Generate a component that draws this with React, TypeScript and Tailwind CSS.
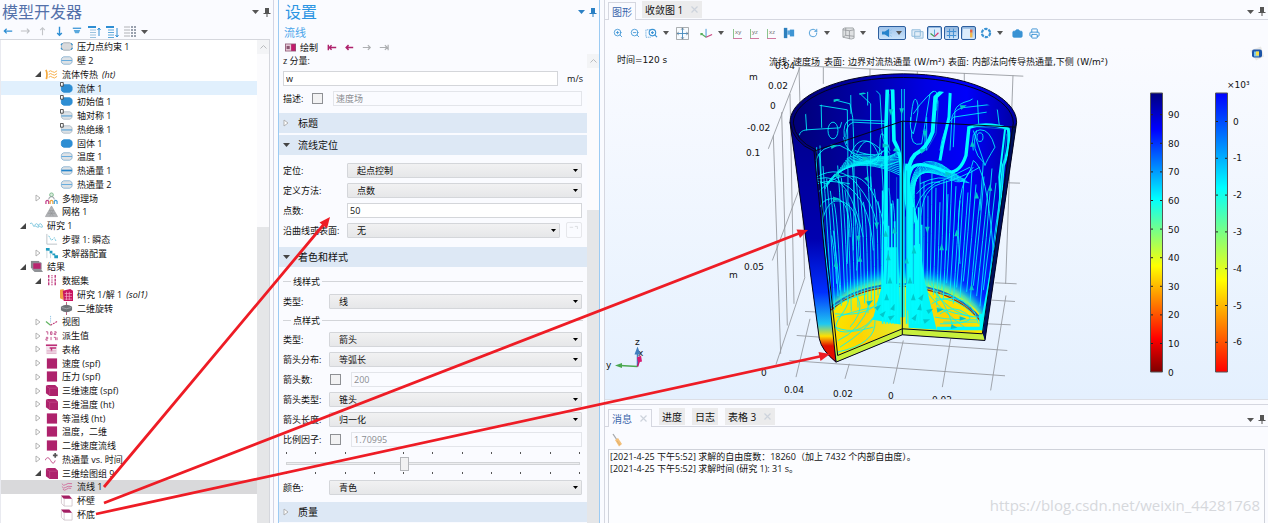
import { useState, type ReactNode } from "react";
import clsx from "clsx";
import { Camera, Printer, RotateCw, ZoomIn, ZoomOut } from "lucide-react";

type NodeRow = {
	level: 1 | 2 | 3;
	icon: string;
	label: string;
	tag?: string;
	open?: boolean;
};

const tree: NodeRow[] = [
	{ level: 3, icon: "point", label: "压力点约束 1" },
	{ level: 3, icon: "edge", label: "壁 2" },
	{ level: 2, icon: "heat", label: "流体传热", tag: "(ht)", open: true },
	{ level: 3, icon: "domainD", label: "流体 1" },
	{ level: 3, icon: "domainD", label: "初始值 1" },
	{ level: 3, icon: "edgeD", label: "轴对称 1" },
	{ level: 3, icon: "edgeD", label: "热绝缘 1" },
	{ level: 3, icon: "domain", label: "固体 1" },
	{ level: 3, icon: "edge", label: "温度 1" },
	{ level: 3, icon: "edgeBold", label: "热通量 1" },
	{ level: 3, icon: "edge", label: "热通量 2" },
	{ level: 2, icon: "multi", label: "多物理场", open: false },
	{ level: 2, icon: "mesh", label: "网格 1" },
	{ level: 1, icon: "study", label: "研究 1", open: true },
	{ level: 2, icon: "step", label: "步骤 1: 瞬态" },
	{ level: 2, icon: "solver", label: "求解器配置", open: false },
	{ level: 1, icon: "results", label: "结果", open: true },
	{ level: 2, icon: "data", label: "数据集", open: true },
	{ level: 3, icon: "solution", label: "研究 1/解 1", tag: "(sol1)" },
	{ level: 3, icon: "revolve", label: "二维旋转" },
	{ level: 2, icon: "view", label: "视图", open: false },
	{ level: 2, icon: "derived", label: "派生值", open: false },
	{ level: 2, icon: "tables", label: "表格", open: false },
	{ level: 2, icon: "plot2d", label: "速度 (spf)", open: false },
	{ level: 2, icon: "plot2d", label: "压力 (spf)", open: false },
	{ level: 2, icon: "plot3d", label: "三维速度 (spf)", open: false },
	{ level: 2, icon: "plot3d", label: "三维温度 (ht)", open: false },
	{ level: 2, icon: "plot2d", label: "等温线 (ht)", open: false },
	{ level: 2, icon: "plot2d", label: "温度，二维", open: false },
	{ level: 2, icon: "plot2d", label: "二维速度流线", open: false },
	{ level: 2, icon: "plot1d", label: "热通量 vs. 时间", open: false },
	{ level: 2, icon: "plot3d", label: "三维绘图组 9", open: true },
	{ level: 3, icon: "stream", label: "流线 1" },
	{ level: 3, icon: "surface", label: "杯壁" },
	{ level: 3, icon: "surface", label: "杯底" },
];

const indent = { 1: "pl-[16px]", 2: "pl-[31px]", 3: "pl-[46px]" };

const pill = "M4 3h6.500q2.500 1 2.500 2.500v3q0 1.500-2.500 2.500H4Q1.500 10 1.500 8.500v-3Q1.500 4 4 3z";

const treeIcons: Record<string, ReactNode> = {
	point: (
		<>
			<path d={pill} fill="#d8dadc" stroke="#a3adb5" />
			<path d="M1 5.500l1.500-2M12 3.500l1.500 2M1 8.500l1.500 2M12 10.500l1.500-2" stroke="#2f8fd0" strokeWidth="1.200" />
		</>
	),
	edge: (
		<>
			<path d={pill} fill="#dde2e6" stroke="#8fb6d3" />
			<path d="M1.500 7h11.500" stroke="#5ea8dc" />
		</>
	),
	edgeBold: (
		<>
			<path d={pill} fill="#dde2e6" stroke="#8fb6d3" />
			<path d="M1.500 7h11.500" stroke="#2384cb" strokeWidth="1.800" />
		</>
	),
	edgeD: (
		<>
			<path d={pill} fill="#dde2e6" stroke="#b4c0ca" />
			<path d="M1.500 7.500h11.500" stroke="#3d94d2" />
			<path d="M.5.5h3v4h-3z" fill="#fff" stroke="#333" strokeWidth=".9" />
		</>
	),
	domain: <path d={pill} fill="#2e8ed3" stroke="#2e8ed3" />,
	domainD: (
		<>
			<path d={pill} fill="#2e8ed3" stroke="#2e8ed3" />
			<path d="M.5.5h3v4h-3z" fill="#fff" stroke="#333" strokeWidth=".9" />
		</>
	),
	heat: (
		<g fill="none" stroke="#f5a93c">
			<path d="M1 2q2 4 .5 10" strokeWidth="1.800" />
			<path d="M4 4q2-2 4 0t5-1M4 7q2-2 4 0t5-1M4 10q2-2 4 0t5-1" />
		</g>
	),
	multi: (
		<g fill="none">
			<circle cx="7" cy="3" r="2" stroke="#7ab98a" fill="#d9ebdd" />
			<path d="M4 8q0-3 3-3t3 3" stroke="#8b9097" />
			<path d="M1 13v-3q1.500-2 3 0v3" stroke="#c2408a" strokeWidth="1.300" />
			<path d="M5.500 13v-3q1.500-2 3 0v3" stroke="#eea23a" strokeWidth="1.300" />
			<path d="M10 13v-3q1.500-2 3 0v3" stroke="#3f9fdc" strokeWidth="1.300" />
		</g>
	),
	mesh: (
		<>
			<path d="M7 1l6.500 11.500H.5z" fill="#b0b2b5" stroke="#a0a2a5" strokeWidth=".8" />
			<path d="M4.500 6h5M3 9h8M5 12l4-6M9 12L5 6" stroke="#8e9092" strokeWidth=".6" />
		</>
	),
	study: (
		<g fill="none" stroke="#7cc6de">
			<path d="M0 5q2-2 3 1t2 2" />
			<path d="M5 7q2-4 4 0t-4 0M9 7q2-4 4 0t-4 0" />
		</g>
	),
	step: (
		<g fill="none">
			<path d="M2 1v11h11" stroke="#b9c0c5" />
			<path d="M4 3l3 5 3-3 2 4" stroke="#63bdd8" strokeDasharray="2 1" />
		</g>
	),
	solver: (
		<>
			<path d="M1 1h4v3H1zM5 4h3v3H5zM8 7h3v2H8zM10 9h4v3h-4z" fill="#1e9cc0" />
			<path d="M2 4v8M6 7v5" stroke="#c9d5da" />
		</>
	),
	results: (
		<>
			<path d="M1 1h9v8H1z" fill="#85878b" />
			<path d="M3 3h9v7H3z" fill="#b9246f" stroke="#8f959b" />
			<path d="M2 10l3 3h9l-2-3z" fill="#8f9296" />
		</>
	),
	data: (
		<g stroke="#bf3b7e" strokeWidth="1.500">
			<path d="M4 1v12" strokeDasharray="3 1" />
			<path d="M7.500 1v12" strokeDasharray="1 1" />
			<path d="M11 1v12" strokeDasharray="3 1" />
		</g>
	),
	solution: (
		<>
			<path d="M0 2l4-1v12l-4-2z" fill="#f2a045" />
			<path d="M3 3l8-2 3 2v11H4z" fill="#c8145f" />
			<path d="M5 6h8M5 9h8M5 12h8M7 4v9M10 4v9" stroke="#f6b7cf" strokeWidth=".7" />
		</>
	),
	revolve: (
		<>
			<path d="M7 0v14" stroke="#b55a78" />
			<path d="M1 5q6-4 12 0v4q-6 4-12 0z" fill="#6f7378" />
			<path d="M2 6q5 2.500 10 0" fill="none" stroke="#b6bac0" strokeWidth=".7" />
		</>
	),
	view: (
		<g fill="none">
			<path d="M6 1v8" stroke="#78b6dc" strokeDasharray="1 1" />
			<path d="M6 11L1 7" stroke="#62b562" strokeWidth="1.300" />
			<path d="M6 11l7-4" stroke="#c23b7c" strokeWidth="1.300" strokeDasharray="2 1" />
		</g>
	),
	derived: (
		<g fill="none" stroke="#c2508a">
			<path d="M1 3h2v3M6 3h1.500v3H6zM10 3h2v1.500h-2V6h2M1 9h2v1.500H1V12h2M6.500 8.500V12M9.500 9h2v3M13 9v3" />
		</g>
	),
	tables: (
		<>
			<path d="M1 1h12v11H1z" fill="#f3e3ec" />
			<path d="M1 2.500h12M5 5.500h7M7 6v3" stroke="#bd2d77" strokeWidth="1.600" />
			<path d="M2 8.500h10M2 11h10" stroke="#d9a3bf" />
		</>
	),
	plot2d: <path d="M2 1.500h11v11H2z" fill="#ae226c" />,
	plot3d: (
		<>
			<path d="M1 2l2-1h8l3 3v9H5l-4-3z" fill="#ae226c" />
			<path d="M1.500 2.500l3.500 2v8M5 4.500h8.500" fill="none" stroke="#c95790" strokeWidth=".6" />
		</>
	),
	plot1d: (
		<>
			<path d="M0 8q3-6 6 0t5 0" fill="none" stroke="#c2508a" />
			<path d="M8.500 2.500h5M11 0v5" stroke="#555" strokeWidth="1.800" />
		</>
	),
	stream: (
		<g fill="none" stroke="#cf6d9b">
			<path d="M2 4q2 3 4 1t7-1M2 7q2 3 4 1t7-1M3 10q2 2 4 0t5-1" />
		</g>
	),
	surface: (
		<>
			<path d="M1 1.500h9l3 3.500H4z" fill="#a31f63" />
			<path d="M1.500 2v8l3 3h8.500V5M4.500 5v8" fill="none" stroke="#cbbdc5" strokeWidth=".8" />
		</>
	),
};

function Icon({ children, size = 14 }: { children: ReactNode; size?: number }) {
	return (
		<svg width={size} height={size} viewBox="0 0 14 14" className="shrink-0" aria-hidden="true">
			{children}
		</svg>
	);
}

function Caret({ className = "text-[#555]" }: { className?: string }) {
	return (
		<svg width="7" height="4" viewBox="0 0 7 4" className={clsx("shrink-0", className)} aria-hidden="true">
			<path d="M0 0h7L3.500 4z" fill="currentColor" />
		</svg>
	);
}

function WindowControls({ className = "text-[#555]" }: { className?: string }) {
	return (
		<div className={clsx("flex items-center gap-1", className)}>
			<button aria-label="菜单">
				<Caret className="text-current" />
			</button>
			<button aria-label="固定">
				<svg width="8" height="9" viewBox="0 0 8 9">
					<path d="M2 0h4v5h1.500v1h-3v3h-1V6h-3V5H2z" fill="currentColor" />
				</svg>
			</button>
		</div>
	);
}

function Scrollbar({ className }: { className: string }) {
	return (
		<div className="w-3 shrink-0 flex flex-col bg-[#fbfbfd]">
			<div className="h-[14px] flex items-center justify-center bg-[#f3f4f6]">
				<svg width="7" height="4" viewBox="0 0 7 4" aria-hidden="true">
					<path d="M.5 3.500l3-3 3 3" fill="none" stroke="#b9bbbe" />
				</svg>
			</div>
			<div className={className} />
			<div className="flex-1 bg-[#e5e6e8]" />
		</div>
	);
}

function ModelBuilder() {
	const [selected, setSelected] = useState(32);
	return (
		<aside className="w-[274px] shrink-0 flex flex-col border-r border-[#d3d5e4]">
			<header className="h-6 flex items-center justify-between pl-0.5 pr-0.5">
				<h1 className="text-[16px] leading-none text-[#5471aa]">模型开发器</h1>
				<WindowControls />
			</header>
			<div className="h-[15px] flex items-center pl-0.5 gap-1">
				<button aria-label="后退">
					<Icon size={13}><path d="M2 6.500h9M5 4L2.500 6.500 5 9" fill="none" stroke="#2e8ed3" strokeWidth="1.300" /></Icon>
				</button>
				<button aria-label="前进">
					<Icon size={13}><path d="M2 6.500h9M8.500 4L11 6.500 8.500 9" fill="none" stroke="#bdbfc3" strokeWidth="1.200" /></Icon>
				</button>
				<button aria-label="上移">
					<Icon size={13}><path d="M7 11V3M4.500 5.500L7 3l2.500 2.500" fill="none" stroke="#c3c5c9" strokeWidth="1.200" /></Icon>
				</button>
				<button aria-label="下移">
					<Icon size={13}><path d="M7 2v9M4.500 8.500L7 11l2.500-2.500" fill="none" stroke="#2e8ed3" strokeWidth="1.500" /></Icon>
				</button>
				<button aria-label="显示">
					<Icon size={13}><path d="M3 3.500h9" stroke="#2e8ed3" strokeWidth="1.300" /><path d="M4 5.500h7L9.500 9h-4z" fill="#5aa9de" /></Icon>
				</button>
				<button aria-label="折叠">
					<Icon><path d="M1 2h8" stroke="#2e8ed3" strokeWidth="2" /><path d="M3 5h6M3 7.500h6M3 10h6M3 12.500h6" stroke="#9cc3de" strokeWidth="1.200" /><path d="M12 11V3M10.500 5L12 3l1.500 2" fill="none" stroke="#2e8ed3" /></Icon>
				</button>
				<button aria-label="展开">
					<Icon><path d="M1 2h8" stroke="#2e8ed3" strokeWidth="2" /><path d="M3 5h6M3 7.500h6M3 10h6M3 12.500h6" stroke="#5fa9da" strokeWidth="1.200" /><path d="M12 3v9M10.500 10l1.500 2 1.500-2" fill="none" stroke="#2e8ed3" /></Icon>
				</button>
				<button aria-label="列" className="flex items-center gap-1">
					<Icon><path d="M1 2h6M1 5h6M1 8h6M1 11h6" stroke="#b0b2b6" /><path d="M8 2h2M8 5h2M8 8h2M8 11h2M11 2h2M11 5h2M11 8h2M11 11h2" stroke="#7a8494" strokeWidth="1.600" /></Icon>
					<Caret />
				</button>
			</div>
			<div className="flex-1 min-h-0 flex border-t border-r border-[#d5d7dd] mr-[3px] bg-white">
				<ul className="flex-1 flex flex-col pb-[2px] border-l border-[#e9eaf0]">
					{tree.map((row, i) => (
						<li key={i} className="flex-1 min-h-[13px] flex">
							<button
								onClick={() => setSelected(i)}
								className={clsx(
									"w-full flex items-center gap-px text-[9px] leading-none whitespace-nowrap",
									indent[row.level],
									i === selected && "bg-[#d9d9db]",
									i === 3 && i !== selected && "bg-[#e1f0fd]"
								)}
							>
								<span className="w-3 flex justify-center">
									{row.open === true && (
										<svg width="6" height="6" viewBox="0 0 6 6"><path d="M6 0v6H0z" fill="#444" /></svg>
									)}
									{row.open === false && (
										<svg width="6" height="8" viewBox="0 0 6 8"><path d="M1 1l4 3-4 3z" fill="#fff" stroke="#aaa" strokeWidth=".9" /></svg>
									)}
								</span>
								<span className="w-4">
									<Icon size={13}>{treeIcons[row.icon]}</Icon>
								</span>
								<span>
									{row.label}
									{row.tag && <em className="ml-1">{row.tag}</em>}
								</span>
							</button>
						</li>
					))}
				</ul>
				<Scrollbar className="h-[173px]" />
			</div>
		</aside>
	);
}

function Section({ title, open, className }: { title: string; open?: boolean; className?: string }) {
	return (
		<button
			aria-expanded={!!open}
			className={clsx("w-full h-5 shrink-0 flex items-center gap-[9px] pl-1 bg-[#dde8f5] text-[10px] leading-none", className)}
		>
			<span className="w-[6px] flex justify-center">
				{open ? (
					<Caret className="text-[#444]" />
				) : (
					<svg width="6" height="8" viewBox="0 0 6 8"><path d="M1 1l4 3-4 3z" fill="#fff" stroke="#aaa" strokeWidth=".9" /></svg>
				)}
			</span>
			{title}
		</button>
	);
}

const box = "h-[15px] min-w-0 border border-[#d4d6da] text-[9px] leading-none";

function Select({ id, value }: { id: string; value: string }) {
	return (
		<div className="relative flex-1 flex">
			<select
				id={id}
				className={clsx(box, "w-full appearance-none pl-[9px] rounded-[1px] bg-linear-to-b from-[#f1f1f2] to-[#e6e7e9]")}
			>
				<option>{value}</option>
			</select>
			<span className="absolute right-[4px] inset-y-0 flex items-center pointer-events-none">
				<svg width="5" height="3" viewBox="0 0 5 3"><path d="M0 0h5L2.500 3z" /></svg>
			</span>
		</div>
	);
}

function Field({ id, label, wide, children }: { id: string; label: string; wide?: boolean; children: ReactNode }) {
	return (
		<div className="h-5 shrink-0 flex items-center pl-1 pr-[5px]">
			<label htmlFor={id} className={clsx("shrink-0 whitespace-nowrap", wide ? "w-16" : "w-[46px]")}>
				{label}
			</label>
			{children}
		</div>
	);
}

function Check({ label }: { label: string }) {
	return (
		<input
			type="checkbox"
			aria-label={label}
			className="appearance-none w-[11px] h-[11px] shrink-0 border border-[#8e9094] bg-[#f2f2f3] ml-px mr-2.5"
		/>
	);
}

function Legend({ children }: { children: ReactNode }) {
	return (
		<div className="h-3 shrink-0 flex items-center gap-0.5 px-1">
			<span className="w-2 h-px bg-[#d3d5d9]" />
			<h3>{children}</h3>
			<span className="flex-1 h-px bg-[#d3d5d9]" />
		</div>
	);
}

function Ticks() {
	return (
		<div className="flex justify-between px-[3px]">
			{Array.from({ length: 11 }, (_, i) => (
				<span key={i} className="w-px h-[2px] bg-[#555]" />
			))}
		</div>
	);
}

function Settings() {
	return (
		<section className="w-[322px] shrink-0 mx-1 flex flex-col border-x border-[#9ccbf3] text-[9px] leading-none">
			<header className="h-6 flex items-center justify-between pl-1.5 pr-0.5">
				<h2 className="text-[16px] leading-none text-[#2b95e3]">设置</h2>
				<WindowControls className="text-[#2b80c4]" />
			</header>
			<p className="h-4 flex items-center pl-[5px] text-[11px] text-[#4aa5ea]">流线</p>
			<div className="h-[14px] flex items-center pl-1.5 gap-1">
				<button className="flex items-center gap-1">
					<Icon size={11}><path d="M0 2h14v10H0z" fill="#8d5573" /><path d="M1 3h7v8H1z" fill="#e8ccd9" /><path d="M2 5h4v4H2z" fill="#8a5571" /><path d="M8 3h5v8H8z" fill="#c31a6c" /></Icon>
					绘制
				</button>
				<button aria-label="第一个" className="ml-1">
					<Icon size={13}><path d="M2.500 4v6M3 7h8M6 4.500L3.500 7 6 9.500" fill="none" stroke="#ae226c" strokeWidth="1.500" /></Icon>
				</button>
				<button aria-label="上一个">
					<Icon size={13}><path d="M3 7h8M6 4.500L3.500 7 6 9.500" fill="none" stroke="#ae226c" strokeWidth="1.700" /></Icon>
				</button>
				<button aria-label="下一个">
					<Icon size={13}><path d="M3 7h8M8.500 4.500L11 7 8.500 9.500" fill="none" stroke="#adafb2" strokeWidth="1.300" /></Icon>
				</button>
				<button aria-label="最后一个">
					<Icon size={13}><path d="M12 4v6M3 7h8M8.500 4.500L11 7 8.500 9.500" fill="none" stroke="#adafb2" strokeWidth="1.300" /></Icon>
				</button>
			</div>
			<div className="flex-1 min-h-0 flex">
				<div className="flex-1 min-w-0 flex flex-col overflow-hidden">
					<label htmlFor="z" className="h-3 mb-0.5 shrink-0 px-1 flex items-center">z 分量:</label>
					<div className="h-5 shrink-0 flex items-center pl-1 pr-1">
						<input id="z" defaultValue="w" className={clsx(box, "flex-1 bg-white border-[#c9cbd0] pl-0.5")} />
						<span className="w-[25px] text-right">m/s</span>
					</div>
					<div className="h-5 mb-[5px] shrink-0 flex items-center pl-1 pr-[5px]">
						<label htmlFor="desc" className="w-7">描述:</label>
						<Check label="描述" />
						<input id="desc" defaultValue="速度场" disabled className={clsx(box, "flex-1 border-[#e3e5ea] text-[#8b8d91] pl-0.5")} />
					</div>
					<Section title="标题" className="mb-[2px]" />
					<Section title="流线定位" open className="mb-[5px]" />
					<Field id="pos" label="定位:" wide>
						<Select id="pos" value="起点控制" />
					</Field>
					<Field id="method" label="定义方法:" wide>
						<Select id="method" value="点数" />
					</Field>
					<Field id="count" label="点数:" wide>
						<input id="count" defaultValue="50" className={clsx(box, "flex-1 bg-white pl-0.5")} />
					</Field>
					<Field id="along" label="沿曲线或表面:" wide>
						<Select id="along" value="无" />
						<button aria-label="转到源" className="w-4 h-4 ml-1.5 rounded-[2px] border border-[#e6e7eb] flex justify-center">
							<Icon size={12}><path d="M2 5h4M8 4h3v3" fill="none" stroke="#d7d9dd" /></Icon>
						</button>
					</Field>
					<Section title="着色和样式" open className="mt-[7px] mb-2" />
					<Legend>线样式</Legend>
					<div className="mt-1 mb-[3px]">
						<Field id="line" label="类型:">
							<Select id="line" value="线" />
						</Field>
					</div>
					<Legend>点样式</Legend>
					<div className="mt-[3px]">
						<Field id="ptype" label="类型:">
							<Select id="ptype" value="箭头" />
						</Field>
						<Field id="dist" label="箭头分布:">
							<Select id="dist" value="等弧长" />
						</Field>
						<Field id="num" label="箭头数:">
							<Check label="箭头数" />
							<input id="num" defaultValue="200" disabled className={clsx(box, "flex-1 border-[#e3e5ea] text-[#8b8d91] pl-0.5")} />
						</Field>
						<Field id="atype" label="箭头类型:">
							<Select id="atype" value="锥头" />
						</Field>
						<Field id="alen" label="箭头长度:">
							<Select id="alen" value="归一化" />
						</Field>
						<Field id="scale" label="比例因子:">
							<Check label="比例因子" />
							<input id="scale" defaultValue="1.70995" disabled className={clsx(box, "flex-1 border-[#e3e5ea] text-[#8b8d91] pl-0.5")} />
						</Field>
					</div>
					<div className="h-7 shrink-0 flex flex-col justify-center pl-1 pr-1">
						<Ticks />
						<input
							type="range"
							aria-label="比例因子滑块"
							min={0}
							max={10}
							defaultValue={4}
							className="h-[18px] mx-[3px] appearance-none bg-transparent [&::-webkit-slider-runnable-track]:h-[3px] [&::-webkit-slider-runnable-track]:border [&::-webkit-slider-runnable-track]:border-[#d2d4d7] [&::-webkit-slider-runnable-track]:bg-[#ecedef] [&::-webkit-slider-thumb]:appearance-none [&::-webkit-slider-thumb]:w-[9px] [&::-webkit-slider-thumb]:h-[14px] [&::-webkit-slider-thumb]:-mt-[6px] [&::-webkit-slider-thumb]:border [&::-webkit-slider-thumb]:border-[#b5b7bb] [&::-webkit-slider-thumb]:bg-[#f1f1f2]"
						/>
						<Ticks />
					</div>
					<Field id="color" label="颜色:">
						<Select id="color" value="青色" />
					</Field>
					<Section title="质量" className="mt-[5px]" />
				</div>
				<Scrollbar className="h-[142px]" />
			</div>
		</section>
	);
}

function Tool({ label, children, on, className }: { label: string; children: ReactNode; on?: boolean; className?: string }) {
	return (
		<button
			aria-label={label}
			className={clsx(
				"h-[14px] flex items-center justify-center shrink-0 text-[#3a93d4]",
				on ? "w-[15px] mx-px rounded-[2px] border border-[#2d5f9f] bg-linear-to-b from-[#8fb4dd] to-[#d3e8fb]" : "w-[17px]",
				className
			)}
		>
			{children}
		</button>
	);
}

function Drop({ label }: { label: string }) {
	return (
		<button aria-label={label} className="w-[11px] shrink-0 flex justify-center">
			<svg width="6" height="4" viewBox="0 0 6 4"><path d="M0 0h6L3 4z" fill="#555" /></svg>
		</button>
	);
}

function AxisPlane({ name }: { name: string }) {
	return (
		<svg width="13" height="13" viewBox="0 0 13 13">
			<path d="M2.500 2v9" stroke="#8cc48f" />
			<path d="M2 11.500h9" stroke="#d07aa1" />
			<text x="4" y="7" fontSize="6" fill="#666">{name}</text>
		</svg>
	);
}

function GraphicsToolbar() {
	return (
		<div className="h-[26px] shrink-0 flex items-center pl-1">
			<Tool label="放大"><ZoomIn size={10} /></Tool>
			<Tool label="缩小"><ZoomOut size={10} /></Tool>
			<Tool label="缩放框">
				<Icon size={13}><path d="M5 3H1v8h5" fill="none" stroke="#3a93d4" strokeDasharray="1 1" /><circle cx="8" cy="6" r="3.500" fill="none" stroke="#3a93d4" strokeWidth="1.200" /><path d="M10.500 8.500L13 11M6.500 6h3M8 4.500v3" stroke="#3a93d4" strokeWidth="1.200" /></Icon>
			</Tool>
			<Drop label="缩放选项" />
			<Tool label="缩放到窗口大小" className="ml-[3px]">
				<Icon size={13}><path d="M.5.5h13v13H.5z" fill="#f7fbff" stroke="#a0a4a8" /><path d="M7 1v12M1 7h12" stroke="#4a8bbd" /><path d="M5.500 3L7 1l1.500 2M5.500 11L7 13l1.500-2M3 5.500L1 7l2 1.500M11 5.500L13 7l-2 1.500" fill="none" stroke="#6c7a87" strokeWidth=".8" /></Icon>
			</Tool>
			<Tool label="默认视图" className="ml-[7px]">
				<Icon size={13}><path d="M6.500 2v9" stroke="#3a93d4" /><path d="M6.500 11L1 7M1 9V7h2" stroke="#56ad5a" fill="none" strokeWidth="1.200" /><path d="M6.500 11L13 8" stroke="#c8437f" strokeWidth="1.200" /></Icon>
			</Tool>
			<Drop label="视图选项" />
			<Tool label="转到 XY 视图" className="ml-[3px]"><AxisPlane name="xy" /></Tool>
			<Tool label="转到 YZ 视图"><AxisPlane name="yz" /></Tool>
			<Tool label="转到 XZ 视图"><AxisPlane name="xz" /></Tool>
			<Tool label="场景">
				<Icon size={12}><path d="M1 1h4v12H1z" fill="#2e80be" /><path d="M5 4h4v5H5z" fill="#5ba6dd" /><path d="M8 3h5v8H8z" fill="#3f95d4" /></Icon>
			</Tool>
			<Tool label="旋转" className="ml-[7px]"><RotateCw size={10} /></Tool>
			<Drop label="旋转选项" />
			<Tool label="透明度" className="ml-2">
				<Icon size={13}><path d="M1 2l2-1h9l1 2v9l-3 1-9-2z" fill="#dfe1e3" stroke="#a2a6aa" /><path d="M1 3l7 1v9M8 4l5-1M4 1v8l9 1M4 9l-3 2" fill="none" stroke="#8d9196" strokeWidth=".8" /></Icon>
			</Tool>
			<Drop label="透明度选项" />
			<button aria-label="场景光" className="w-7 h-[14px] ml-2.5 shrink-0 flex items-center justify-evenly rounded-[2px] border border-[#2d5f9f] bg-linear-to-b from-[#9fc3ea] to-[#cbe4fb]">
				<Icon size={10}><path d="M0 5h4l6-4v12L4 9H0z" fill="#2583cc" /><path d="M11 4l3-2M11 7h3M11 10l3 2" stroke="#8cbfe6" /></Icon>
				<svg width="6" height="4" viewBox="0 0 6 4"><path d="M0 0h6L3 4z" fill="#555" /></svg>
			</button>
			<Tool label="透明" className="ml-[3px]">
				<Icon size={13}><path d="M1 3h9v7H1zM4 5h9v7H4z" fill="#e3eef8" stroke="#8db9da" /></Icon>
			</Tool>
			<Tool label="显示轴方向" on>
				<Icon size={11}><path d="M0 0h14v14H0z" fill="#d9eafa" /><path d="M7 2v8" stroke="#3a93d4" /><path d="M7 11L2 7" stroke="#3d9c48" strokeWidth="1.500" /><path d="M7 11l5-5" stroke="#d5336f" strokeWidth="1.500" /></Icon>
			</Tool>
			<Tool label="显示栅格" on>
				<Icon size={11}><path d="M4.500 1v12M9.500 1v12M1 4.500h12M1 9.500h12" stroke="#4690d2" strokeWidth="1.300" /></Icon>
			</Tool>
			<Tool label="显示图例" on>
				<Icon size={11}><path d="M0 1h9v12H0z" fill="#dcecfb" /><path d="M9 2h3v4H9z" fill="#e8623f" /><path d="M9 6h3v6H9z" fill="#f2b747" /></Icon>
			</Tool>
			<Tool label="刷新">
				<Icon size={12}><circle cx="7" cy="7" r="4.800" fill="none" stroke="#3a93d4" strokeWidth="2.600" strokeDasharray="3.800 1.200" /></Icon>
			</Tool>
			<Drop label="刷新选项" />
			<Tool label="快照" className="ml-1">
				<Camera size={11} fill="#3a93d4" stroke="#3a93d4" />
			</Tool>
			<Tool label="打印"><Printer size={11} /></Tool>
		</div>
	);
}

// everything inside the cup is drawn on a grid three times finer than the canvas
const finePaths = [
	"M200 240L195 160Q198 155 210 160L322 178Q326 400 322 640",
	"M178 255Q180 240 200 238L300 232L305 215",
	"M245 232L243 140Q246 135 260 142L330 160L338 200Q345 300 340 600",
	"M333 190L332 115Q335 108 345 115L392 160V420",
	"M383 165V95L420 132L426 240Q430 290 450 310",
	"M313 260Q308 215 330 208L440 212",
	"M320 280Q310 225 340 215L436 220",
	"M264 240a15 25 0 1 0 30 0a15 25 0 1 0-30 0",
	"M512 220Q518 130 530 150T520 250Q508 240 512 200",
	"M520 190Q560 130 600 110M515 240Q510 290 545 280L570 130Q600 100 590 180",
	"M485 100V800M493 95V800M480 320V800",
	"M555 235V290M560 200V300",
	"M640 290L645 180Q650 160 690 150L712 135L716 220",
	"M630 300L636 200Q640 182 665 172L770 160L778 225",
	"M600 300Q610 230 640 200L740 185",
	"M700 300Q690 240 720 238T765 290Q740 330 735 345L700 240M710 240Q690 300 730 335L720 480",
	"M711 260a9 13 0 1 0 18 0a9 13 0 1 0-18 0",
	"M228 330Q240 285 300 285Q330 300 380 330T480 330",
	"M228 380Q300 340 350 400T410 520",
	"M230 385Q290 370 320 420T370 560",
	"M232 400Q270 385 310 400Q390 440 400 600",
	"M235 425Q290 360 350 380T440 560",
	"M228 390L260 400L285 370L300 395L330 400",
	"M240 470Q250 440 290 445T330 560",
	"M250 500Q270 430 320 460T350 660",
	"M275 555Q285 610 290 700M280 540L300 720",
	"M230 290V370Q236 520 262 760M240 285L250 560L276 760",
	"M310 260Q320 310 370 330T420 280T450 300",
	"M330 320Q350 250 400 280T400 330",
	"M350 310Q380 240 410 300T340 330M345 300Q420 330 440 290",
	"M340 330Q380 360 430 300",
	"M540 400Q600 370 640 390T700 330Q740 350 760 600",
	"M530 430Q560 390 600 395M525 480Q550 400 620 385Q650 370 690 350",
	"M545 560Q530 420 600 400T720 350M620 600V390M660 640Q640 400 700 350",
	"M275 770Q330 740 380 730M290 800Q350 780 400 770M285 830Q360 860 400 800",
	"M300 890Q380 840 410 790M295 870Q360 840 390 760M330 720Q390 760 330 830",
	"M292 905Q410 880 405 810M285 790Q400 800 420 740M300 740Q350 730 300 800T400 830",
	"M600 730Q650 730 690 770M585 745Q650 740 700 790M590 770Q640 790 700 800",
	"M600 790Q640 760 680 790T600 820M570 700Q620 760 640 830M550 710Q600 780 680 835",
	"M580 720Q640 800 720 800M575 760Q600 740 650 745T715 820M610 815H710M585 800Q640 810 715 808",
];

const boldPaths = [
	{ d: "M443 88L438 230V800", w: 11 },
	{ d: "M443 88L458 120L462 270Q485 310 486 370V800", w: 11 },
	{ d: "M632 98L586 140L578 245Q560 295 525 312Q498 340 505 420L530 520V800", w: 12 },
	{ d: "M632 98L627 200L608 285L600 330", w: 9 },
	{ d: "M687 230L678 315Q660 370 620 365Q540 330 518 350Q495 380 510 460L520 800", w: 10 },
	{ d: "M502 340Q492 420 504 480V780", w: 12 },
	{ d: "M683 232Q740 212 805 235Q812 290 790 345L768 600L735 800L728 840", w: 9 },
	{ d: "M796 230L778 380L782 460L765 600L728 800", w: 6 },
	{ d: "M590 834H725L722 790", w: 11 },
];

const leftFan = Array.from({ length: 14 }, (_, i) => `M480 ${296 + i * 6}C${430 - i * 8} ${350 - i * 4} ${390 - i * 10} ${285 + i * 8} ${320 - i * 5} ${325 + i * 7}`);
const rightFan = Array.from({ length: 14 }, (_, i) => `M${500 + i * 2} ${620 - i * 10}C${495 + i} ${380 - i * 6} ${520 + i * 4} ${300 + i * 6} ${610 + i * 6} ${345 + i * 4}`);
const leftDown = Array.from({ length: 21 }, (_, i) => {
	const x = 238 + i * 11;
	return `M${x} ${310 + ((i * 37) % 150)}Q${x + 12} 500 ${x + 26 - i} ${720 + ((i * 29) % 70)}`;
});
const rightDown = Array.from({ length: 21 }, (_, i) => {
	const x = 540 + i * 12;
	return `M${x} ${350 + ((i * 43) % 110)}Q${x + 2 - i} 560 ${x - i * 2} ${690 + ((i * 31) % 80)}`;
});
// close lines that make up the rising column in the middle
const column = Array.from({ length: 12 }, (_, i) => {
	const x = i < 6 ? 428 + i * 9 : 500 + (i - 6) * 9;
	return `M${x} ${420 + ((i * 53) % 120)}V820`;
});
const cones = [
	[290, 148, 90], [368, 128, 100], [485, 182, 180], [453, 185, 180], [670, 168, 70], [282, 287, 80], [378, 325, 90], [295, 375, 110],
	[383, 388, 150], [555, 250, 180], [697, 280, 0], [288, 445, 90], [410, 525, 180], [750, 412, 0], [710, 435, 0], [650, 548, 0],
	[437, 285, 90], [470, 300, 120], [550, 300, 70], [355, 565, 180], [562, 538, 180], [288, 640, 0], [360, 625, 0], [605, 590, 0],
	[695, 710, 0], [668, 804, 90], [642, 830, 100], [600, 778, 80], [390, 755, 60], [460, 770, 20], [440, 740, 0], [520, 740, 0],
	[540, 770, 10], [525, 800, 30], [560, 810, 70], [430, 790, 40], [625, 370, 90], [437, 550, 0], [463, 540, 0], [500, 630, 0],
	[545, 740, 30], [510, 690, 0], [450, 690, 0], [455, 800, 60], [415, 770, 50], [570, 780, 60], [445, 620, 0], [522, 600, 0],
];

const gridLines =
	"M165 45L850 77M180 50L85 295M150 130L162 760M125 185L142 825M100 255L122 910M177 50L194 680M250 50V100M390 55V75M532 62V72M673 68V95M819 75L797 700" +
	"M180 410L97 630M195 680L108 942M805 397L840 398M765 697L830 700M755 749L825 753M740 820L812 823M148 930L795 976M170 855L802 900M195 783L240 785" +
	"M210 805L168 980M328 940L315 985M490 870L460 1000M632 865L607 1010M798 735L752 1020";

const axisLabels = [
	["0.04", 775, 68], ["m", 749, 79], ["0.02", 768, 88], ["0", 770, 108], ["-0.02", 747, 130], ["0.1", 746, 155], ["m", 729, 277],
	["0.05", 744, 269], ["0", 761, 375], ["0.04", 784, 392], ["0.02", 833, 396], ["0", 888, 398], ["0.02", 932, 402],
	["z", 635, 344], ["x", 638, 355], ["y", 606, 367],
] as const;

function CupPlot() {
	return (
		<svg viewBox="605 46 663 352" className="w-full h-full font-['DejaVu_Sans','Noto_Sans_CJK_SC',sans-serif]" role="img" aria-label="三维绘图组 9">
			<defs>
				<linearGradient id="jetDown" x1="0" y1="0" x2="0" y2="1">
					<stop offset="0" stopColor="#00007f" />
					<stop offset=".13" stopColor="#0000ff" />
					<stop offset=".38" stopColor="#00ffff" />
					<stop offset=".62" stopColor="#ffff00" />
					<stop offset=".88" stopColor="#ff0000" />
					<stop offset="1" stopColor="#7f0000" />
				</linearGradient>
				<linearGradient id="jetShort" x1="0" y1="0" x2="0" y2="1">
					<stop offset="0" stopColor="#0000ff" />
					<stop offset=".34" stopColor="#00ffff" />
					<stop offset=".67" stopColor="#ffff00" />
					<stop offset="1" stopColor="#ff0000" />
				</linearGradient>
				<linearGradient id="wall" gradientUnits="userSpaceOnUse" x1="150" y1="0" x2="830" y2="0">
					<stop offset="0" stopColor="#000074" />
					<stop offset=".3" stopColor="#0000a4" />
					<stop offset=".6" stopColor="#0000e4" />
					<stop offset=".78" stopColor="#0000fa" />
					<stop offset=".9" stopColor="#0000cc" />
					<stop offset="1" stopColor="#0000a0" />
				</linearGradient>
				<linearGradient id="wallLow" gradientUnits="userSpaceOnUse" x1="0" y1="400" x2="0" y2="700">
					<stop offset="0" stopColor="#0010e8" stopOpacity="0" />
					<stop offset="1" stopColor="#0020ff" />
				</linearGradient>
				<linearGradient id="outer" gradientUnits="userSpaceOnUse" x1="0" y1="200" x2="0" y2="930">
					<stop offset="0" stopColor="#00008c" />
					<stop offset=".5" stopColor="#0000b0" />
					<stop offset=".72" stopColor="#0030ff" />
					<stop offset=".85" stopColor="#20c8f0" />
					<stop offset=".9" stopColor="#ffe000" />
					<stop offset=".94" stopColor="#e01000" />
				</linearGradient>
				<radialGradient id="floor" cx=".5" cy=".5" r=".6">
					<stop offset="0" stopColor="#e0ee30" />
					<stop offset=".5" stopColor="#ffd400" />
					<stop offset="1" stopColor="#f4f400" />
				</radialGradient>
				<filter id="soft" x="-20%" y="-20%" width="140%" height="140%">
					<feGaussianBlur stdDeviation="12" />
				</filter>
				<clipPath id="inside">
					<path d="M222 302L160 235A340 145 0 0 1 827 230L735 862L487 845L288 930Z" />
				</clipPath>
			</defs>

			<g transform="translate(740 50) scale(.3333)">
				<path d={gridLines} fill="none" stroke="#92959b" strokeWidth="2.500" />
				<path d="M150 215A340 145 0 0 1 830 215L735 870L487 853L288 935Q245 900 238 865Z" fill="url(#wall)" />
				<g clipPath="url(#inside)">
					<path d="M150 60H830V940H150z" fill="url(#wallLow)" />
					<ellipse cx="490" cy="845" rx="262" ry="185" fill="#0090ff" filter="url(#soft)" />
					<ellipse cx="490" cy="842" rx="248" ry="160" fill="#10f0e8" filter="url(#soft)" />
					<ellipse cx="490" cy="845" rx="242" ry="150" fill="#d8ff20" filter="url(#soft)" />
					<ellipse cx="495" cy="835" rx="238" ry="128" fill="url(#floor)" />
					<path d="M272 772Q350 704 487 700Q650 711 728 812" fill="none" stroke="#1a70c0" strokeWidth="6" />
					<path d="M272 779Q350 711 487 707Q650 718 728 819" fill="none" stroke="#902818" strokeWidth="4" />
					<g fill="none" stroke="#00f4fc" strokeWidth="2.600">
						{[...finePaths, ...leftFan, ...rightFan, ...leftDown, ...rightDown].map((d) => (
							<path key={d} d={d} />
						))}
					</g>
					<path d="M436 590H474L482 822L398 808L430 690zM500 590L540 580L552 680L590 838L506 832z" fill="#00f6f8" />
					<g fill="none" stroke="#00fbff" strokeLinejoin="round">
						{column.map((d) => (
							<path key={d} d={d} strokeWidth="5" />
						))}
						{boldPaths.map((p) => (
							<path key={p.d} d={p.d} strokeWidth={p.w} />
						))}
					</g>
					<path d="M448 130V560M596 150L588 250L560 300M500 360V700M520 470V700M445 600L440 700M470 380V700M700 228L796 236M800 250L770 560" fill="none" stroke="#0a8fd8" strokeWidth="2" />
					{cones.map(([x, y, turn]) => (
						<path key={`${x}-${y}`} d="M0-11L7 9H-7z" transform={`translate(${x} ${y}) rotate(${turn})`} fill="#00c8cc" />
					))}
				</g>
				<path d="M150 215L238 865Q245 900 288 935L222 302Q158 275 150 215Z" fill="url(#outer)" />
				<path d="M830 215L735 870L728 850L815 235Z" fill="#00105c" />
				<path d="M288 935L293 915L487 835L727 850L735 870L487 853Z" fill="#c8f03c" />
				<g fill="none" stroke="#05051c" strokeWidth="3">
					<path d="M222 302Q158 275 150 215A340 145 0 0 1 830 215L735 870L487 853L288 935Q245 900 238 865L150 215" />
					<path d="M228 298Q165 270 160 218A330 137 0 0 1 820 218L727 850L487 835L293 915Z" />
					<path d="M222 302L487 212L827 230M487 212V853M222 302L288 935" />
				</g>
			</g>

			<g fontSize="9" fill="#111">
				<text x="617" y="62">时间=120 s</text>
				<text x="769" y="64">流线: 速度场</text>
				<text x="824" y="64">表面: 边界对流热通量 (W/m²)</text>
				<text x="948" y="64">表面: 内部法向传导热通量,下侧 (W/m²)</text>
				{axisLabels.map(([t, x, y]) => (
					<text key={`${t}-${x}`} x={x} y={y}>{t}</text>
				))}
				<text x="1227" y="87">×10³</text>
				{Array.from({ length: 10 }, (_, i) => (
					<text key={i} x="1168" y={375 - i * 28.6}>{i * 10}</text>
				))}
				{Array.from({ length: 7 }, (_, i) => (
					<text key={i} x="1233" y={124 + i * 36.8}>{i ? -i : 0}</text>
				))}
			</g>
			<path d="M1150.500 92.500h12v279h-12z" fill="url(#jetDown)" stroke="#555" />
			<path d="M1215.500 92.500h12v279h-12z" fill="url(#jetShort)" stroke="#555" />
			<g stroke="#222">
				{Array.from({ length: 9 }, (_, i) => (
					<path key={i} d={`M1151 ${343 - i * 28.6}h2M1160 ${343 - i * 28.6}h2`} />
				))}
				{Array.from({ length: 7 }, (_, i) => (
					<path key={i} d={`M1216 ${121 + i * 36.8}h2M1225 ${121 + i * 36.8}h2`} />
				))}
			</g>

			<path d="M637.500 366V352" stroke="#3f7fbf" strokeWidth="1.500" />
			<path d="M637.500 346l3 8h-6z" fill="#3f7fbf" />
			<path d="M637.500 366L620 365" stroke="#4aa84f" strokeWidth="1.500" />
			<path d="M615 365l7-2.500v5z" fill="#4aa84f" />
			<path d="M637.500 366l2-6" stroke="#c2186a" strokeWidth="1.500" />
			<path d="M641 355l1 6-4 1-1-5z" fill="#d81b72" />

			<path d="M1250 50l11-4 3 10-8 4z" fill="#e8e8e6" />
			<rect x="1252" y="49" width="10" height="8" rx="2" fill="#1d55a8" />
			<rect x="1254" y="51" width="5" height="5" fill="#7ec8e8" />
			<rect x="1256" y="51" width="3" height="4" fill="#f5dd4a" />
		</svg>
	);
}

function Tab({ label, active, closable }: { label: string; active?: boolean; closable?: boolean }) {
	return (
		<button
			role="tab"
			aria-selected={!!active}
			className={clsx(
				"flex items-center px-[3px] text-[10px] leading-none whitespace-nowrap",
				active ? "h-[18px] -mb-px border border-b-0 border-[#d5d7e0] bg-[#fafbff] text-[#3c66ab]" : "h-[17px] mb-px bg-[#ebebec]"
			)}
		>
			{label}
			{closable && (
				<svg width="7" height="7" viewBox="0 0 7 7" className="ml-2 mr-px" aria-hidden="true">
					<path d="M.5.5l6 6M6.500.5l-6 6" stroke="#cdd3dc" strokeWidth="1.200" />
				</svg>
			)}
		</button>
	);
}

function Graphics() {
	return (
		<section className="flex-1 min-h-0 flex flex-col border-b border-[#dcdfe6]">
			<div className="h-5 shrink-0 flex items-end justify-between border-b border-[#d5d7e0] pl-[3px] pr-0.5">
				<div role="tablist" className="flex items-end gap-1.5">
					<Tab label="图形" active />
					<Tab label="收敛图 1" closable />
				</div>
				<div className="self-center pt-1">
					<WindowControls />
				</div>
			</div>
			<GraphicsToolbar />
			<div className="flex-1 min-h-0 bg-linear-to-b from-[#fafbff] to-[#e4f0fe]">
				<CupPlot />
			</div>
		</section>
	);
}

function Messages() {
	return (
		<section className="h-[119px] shrink-0 mt-1 flex flex-col border-t border-[#d5d7e0]">
			<div className="h-[22px] shrink-0 flex items-end justify-between border-b border-[#d5d7e0] pl-[3px] pr-0.5">
				<div role="tablist" className="flex items-end gap-[7px]">
					<Tab label="消息" active closable />
					<Tab label="进度" />
					<Tab label="日志" />
					<Tab label="表格 3" closable />
				</div>
				<div className="self-center pt-2">
					<WindowControls />
				</div>
			</div>
			<div className="h-[22px] shrink-0 flex items-center pl-1.5 pt-1">
				<button aria-label="清除">
					<Icon><path d="M2 1l4 6" stroke="#a5a8ab" strokeWidth="1.300" /><path d="M4 7l3-2 4 6-3 2.500z" fill="#f3c07a" /><path d="M6 8l3 4" stroke="#d9a766" strokeWidth=".7" /></Icon>
				</button>
			</div>
			<div className="flex-1 mx-[3px] pl-px pt-px border border-b-0 border-[#cfd2da] bg-[#fcfdff] text-[9px] leading-[12px]">
				<p>[2021-4-25 下午5:52] 求解的自由度数：18260（加上 7432 个内部自由度）。</p>
				<p>[2021-4-25 下午5:52] 求解时间 (研究 1): 31 s。</p>
			</div>
		</section>
	);
}

// pointers drawn over all panels, from the plotted features to their settings
function Pointers() {
	return (
		<svg viewBox="0 0 1268 523" className="absolute inset-0 w-full h-full pointer-events-none" aria-hidden="true">
			<g stroke="#ee1c25" strokeWidth="2.800">
				<path d="M104 487L325 223M104 503L800 233M96 514L822 356" />
			</g>
			<g fill="#ee1c25">
				<path d="M330 217L319.500 222.500L327 228.500z" />
				<path d="M808 230L796.500 229.500L800 238z" />
				<path d="M830 354L818.500 352L820.500 361z" />
			</g>
		</svg>
	);
}

export default function App() {
	return (
		<div className="relative h-screen flex overflow-hidden bg-[#fafbff] text-[#111] font-['Open_Sans','Noto_Sans_CJK_SC',sans-serif]">
			<ModelBuilder />
			<Settings />
			<main className="flex-1 min-w-0 flex flex-col border-l border-[#d5d7e0]">
				<Graphics />
				<Messages />
			</main>
			<Pointers />
			<p className="absolute right-2 bottom-2 text-[15px] leading-5 text-[#d6d8dc] pointer-events-none">
				https://blog.csdn.net/weixin_44281768
			</p>
		</div>
	);
}
